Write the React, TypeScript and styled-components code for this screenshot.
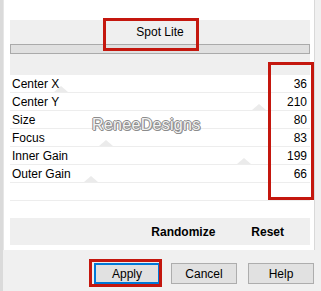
import React from 'react';
import styled, { createGlobalStyle } from 'styled-components';

const GlobalStyle = createGlobalStyle`
  body {
    margin: 0;
    background: #f0f0f0;
    font-family: 'Liberation Sans', Arial, sans-serif;
    font-size: 12px;
    color: #000;
  }
`;

const Window = styled.div`
  position: relative;
  width: 321px;
  height: 291px;
  overflow: hidden;
  background: #f0f0f0;
  border-left: 3px solid #dadada;
  box-sizing: border-box;
`;

const Panel = styled.div`
  width: 312px;
  height: 250px;
  box-sizing: border-box;
  background: #fff;
  border-left: 1px solid #e6e6e6;
  border-right: 1px solid #d9d9d9;
  padding: 20px 4px 0 6px;
  display: flex;
  flex-direction: column;
`;

const Header = styled.div`
  height: 55px;
  background: #efefef;
  display: flex;
  flex-direction: column;
`;

const Title = styled.div`
  height: 24px;
  line-height: 24px;
  text-align: center;
`;

const Bar = styled.div`
  height: 10px;
  box-sizing: border-box;
  border: 1px solid #aaaaaa;
  background: #e0e0e0;
`;

const Rows = styled.div`
  display: flex;
  flex-direction: column;
`;

const Row = styled.div`
  position: relative;
  height: 18px;
  box-sizing: border-box;
  border-bottom: 1px solid #ededed;
  display: flex;
  align-items: center;
  justify-content: space-between;
  padding: 0 3px 0 2px;
`;

const Thumb = styled.span`
  position: absolute;
  bottom: 0;
  width: 0;
  height: 0;
  border-left: 7px solid transparent;
  border-right: 7px solid transparent;
  border-bottom: 6px solid #ebebeb;
  transform: translateX(-50%);
`;

const Label = styled.span`
  position: relative;
`;

const Value = styled.span`
  position: relative;
`;

const Spacer = styled.div`
  height: 17px;
  border-bottom: 1px solid #ededed;
`;

const ActionBar = styled.div`
  margin-top: 17px;
  height: 27px;
  background: #efefef;
  display: flex;
  align-items: center;
  justify-content: flex-end;
  gap: 36px;
  padding-right: 26px;
`;

const ActionText = styled.span`
  font-weight: bold;
  font-size: 12px;
`;

const Footer = styled.div`
  display: flex;
  justify-content: flex-end;
  gap: 11px;
  padding: 13px 7px 0 0;
`;

const Button = styled.div<{ $default?: boolean }>`
  width: 66px;
  height: 21px;
  box-sizing: border-box;
  display: flex;
  align-items: center;
  justify-content: center;
  background: #e1e1e1;
  border: ${(p) => (p.$default ? '2px solid #0078d7' : '1px solid #adadad')};
`;

const Watermark = styled.div`
  position: absolute;
  left: 89px;
  top: 116px;
  font-size: 16px;
  letter-spacing: 0.3px;
  color: #f2f2f2;
  text-shadow: -1px 0 #8c8c8c, 1px 0 #8c8c8c, 0 -1px #8c8c8c, 0 1px #8c8c8c,
    1px 1px #9a9a9a;
  pointer-events: none;
`;

const Marker = styled.div`
  position: absolute;
  box-sizing: border-box;
  border: 3px solid #c4170e;
  pointer-events: none;
`;

const params = [
  { label: 'Center X', value: 36, thumb: 0.17 },
  { label: 'Center Y', value: 210, thumb: 0.83 },
  { label: 'Size', value: 80, thumb: 0.55 },
  { label: 'Focus', value: 83, thumb: 0.32 },
  { label: 'Inner Gain', value: 199, thumb: 0.78 },
  { label: 'Outer Gain', value: 66, thumb: 0.27 },
];

export default function App() {
  return (
    <>
      <GlobalStyle />
      <Window>
        <Panel>
          <Header>
            <Title>Spot Lite</Title>
            <Bar />
          </Header>
          <Rows>
            {params.map((p) => (
              <Row key={p.label}>
                <Thumb style={{ left: `${p.thumb * 100}%` }} />
                <Label>{p.label}</Label>
                <Value>{p.value}</Value>
              </Row>
            ))}
          </Rows>
          <Spacer />
          <ActionBar>
            <ActionText>Randomize</ActionText>
            <ActionText>Reset</ActionText>
          </ActionBar>
        </Panel>
        <Footer>
          <Button $default>Apply</Button>
          <Button>Cancel</Button>
          <Button>Help</Button>
        </Footer>
        <Watermark>ReneeDesigns</Watermark>
        <Marker style={{ left: 100, top: 18, width: 96, height: 33 }} />
        <Marker style={{ left: 265, top: 62, width: 46, height: 138 }} />
        <Marker style={{ left: 86, top: 259, width: 73, height: 28 }} />
      </Window>
    </>
  );
}
